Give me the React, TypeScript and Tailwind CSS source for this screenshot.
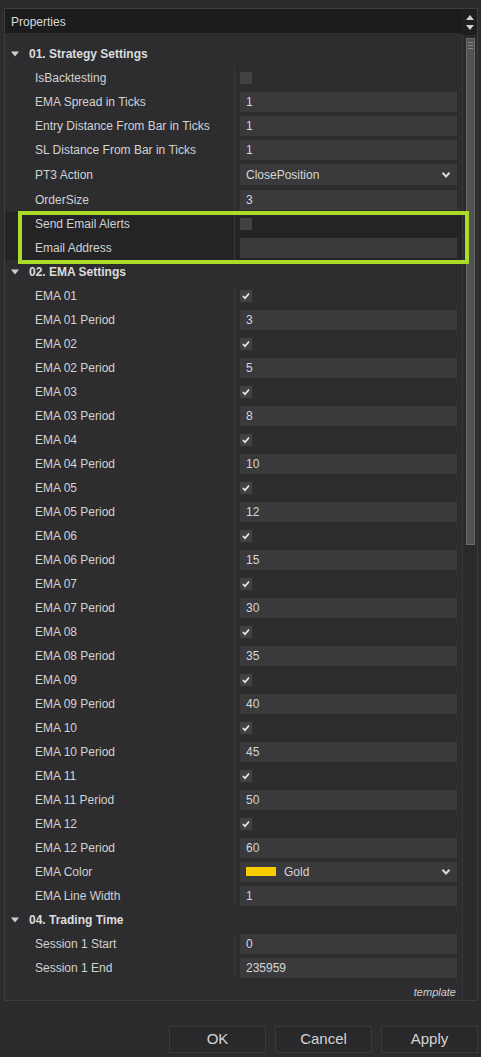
import React from "react";

type Row =
  | { type: "section"; label: string }
  | { type: "check"; label: string; checked: boolean; hl?: boolean }
  | { type: "text"; label: string; value: string; hl?: boolean }
  | { type: "select"; label: string; value: string }
  | { type: "color"; label: string; value: string };

const emaRows: Row[] = [];
const periods = ["3", "5", "8", "10", "12", "15", "30", "35", "40", "45", "50", "60"];
periods.forEach((p, i) => {
  const n = String(i + 1).padStart(2, "0");
  emaRows.push({ type: "check", label: `EMA ${n}`, checked: true });
  emaRows.push({ type: "text", label: `EMA ${n} Period`, value: p });
});

const rows: Row[] = [
  { type: "section", label: "01. Strategy Settings" },
  { type: "check", label: "IsBacktesting", checked: false },
  { type: "text", label: "EMA Spread in Ticks", value: "1" },
  { type: "text", label: "Entry Distance From Bar in Ticks", value: "1" },
  { type: "text", label: "SL Distance From Bar in Ticks", value: "1" },
  { type: "select", label: "PT3 Action", value: "ClosePosition" },
  { type: "text", label: "OrderSize", value: "3" },
  { type: "check", label: "Send Email Alerts", checked: false, hl: true },
  { type: "text", label: "Email Address", value: "", hl: true },
  { type: "section", label: "02. EMA Settings" },
  ...emaRows,
  { type: "color", label: "EMA Color", value: "Gold" },
  { type: "text", label: "EMA Line Width", value: "1" },
  { type: "section", label: "04. Trading Time" },
  { type: "text", label: "Session 1 Start", value: "0" },
  { type: "text", label: "Session 1 End", value: "235959" },
];

const Chevron = () => (
  <svg width="10" height="8" viewBox="0 0 10 8" className="mr-[6px]">
    <polyline points="1.5,1.8 5,5.5 8.5,1.8" fill="none" stroke="#d8d8d8" strokeWidth="2" />
  </svg>
);

const Check = () => (
  <svg width="12" height="12" viewBox="0 0 12 12">
    <polyline points="3,6 5,8.3 9,3.5" fill="none" stroke="#f0f0f0" strokeWidth="1.6" />
  </svg>
);

function Value({ row }: { row: Row }) {
  if (row.type === "check") {
    return (
      <div className="ml-[5px] w-[12px] h-[12px] bg-[#424245] flex items-center justify-center">
        {row.checked ? <Check /> : null}
      </div>
    );
  }
  if (row.type === "text") {
    return (
      <div className="ml-[5px] w-[217px] h-[20px] bg-[#3a3a3d] flex items-center pl-[6px] text-[#d6d6d6]">
        {row.value}
      </div>
    );
  }
  if (row.type === "select") {
    return (
      <div className="ml-[5px] w-[217px] h-[21px] bg-[#3a3a3d] flex items-center justify-between pl-[6px] text-[#d6d6d6]">
        <span>{row.value}</span>
        <Chevron />
      </div>
    );
  }
  if (row.type === "color") {
    return (
      <div className="ml-[5px] w-[217px] h-[20px] bg-[#3a3a3d] flex items-center justify-between pl-[6px] text-[#d6d6d6]">
        <div className="flex items-center">
          <div className="w-[30px] h-[9px] bg-[#f7cd00]" />
          <span className="ml-[8px]">{row.value}</span>
        </div>
        <Chevron />
      </div>
    );
  }
  return null;
}

export default function App() {
  return (
    <div
      className="relative w-[481px] h-[1057px] bg-[#2c2c2e] overflow-hidden text-[12px] text-[#d4d4d4]"
      style={{ fontFamily: '"Liberation Sans", Arial, sans-serif' }}
    >
      <div className="pt-[8px] pl-[4px]">
        <div className="w-[474px] h-[993px] border border-[#3d3d40] bg-[#2d2d30] flex">
          <div className="w-[457px] flex flex-col">
            <div className="h-[26px] bg-[#1c1c1e] flex items-center pl-[6px] pt-[2px] text-[#d8d8d8]">Properties</div>
            <div className="pt-[9px]">
              {rows.map((row, i) =>
                row.type === "section" ? (
                  <div key={i} className="h-[24px] flex items-center">
                    <svg width="8" height="6" viewBox="0 0 8 6" className="ml-[6px]">
                      <polygon points="0,0.5 8,0.5 4,5.5" fill="#cfcfcf" />
                    </svg>
                    <span className="ml-[10px] font-bold text-[#dcdcdc]">{row.label}</span>
                  </div>
                ) : (
                  <div
                    key={i}
                    className={`${row.type === "select" ? "h-[26px]" : "h-[24px]"} flex items-center ${row.hl ? "bg-[#242426]" : ""}`}
                  >
                    <div className="w-[229px] pl-[30px] text-[#d2d2d2] whitespace-nowrap">{row.label}</div>
                    <div className="h-full border-l border-[#38383b] flex items-center">
                      <Value row={row} />
                    </div>
                  </div>
                )
              )}
            </div>
            <div className="flex justify-end pr-[6px] pt-[4px] italic text-[11px] text-[#cfcfcf]">template</div>
          </div>
          <div className="w-[15px] flex flex-col bg-[#2a2a2c]">
            <div className="h-[26px] bg-[#1f1f21] flex flex-col items-center justify-center gap-[5px]">
              <svg width="8" height="5" viewBox="0 0 8 5">
                <polygon points="0,5 8,5 4,0" fill="#d0d0d0" />
              </svg>
              <svg width="8" height="5" viewBox="0 0 8 5">
                <polygon points="0,0 8,0 4,5" fill="#d0d0d0" />
              </svg>
            </div>
            <div className="flex-1 flex justify-center pt-[3px] border-l border-[#38383b]">
              <div className="w-[9px] h-[507px] bg-[#525255] border border-[#6a6a6d] flex flex-col items-center pt-[3px] gap-[2px]">
                <div className="w-[5px] h-px bg-[#8a8a8d]" />
                <div className="w-[5px] h-px bg-[#8a8a8d]" />
                <div className="w-[5px] h-px bg-[#8a8a8d]" />
              </div>
            </div>
          </div>
        </div>
      </div>
      <div className="flex justify-end gap-[9px] pr-[3px] pt-[25px]">
        {["OK", "Cancel", "Apply"].map((b) => (
          <div
            key={b}
            className="w-[97px] h-[27px] bg-[#29292b] border border-[#3b3b3e] flex items-center justify-center text-[15px] text-[#d4d4d4]"
          >
            {b}
          </div>
        ))}
      </div>
      <div className="absolute left-[18px] top-[211px] w-[451px] h-[53px] border-[4px] border-[#a9dc28]" />
    </div>
  );
}
